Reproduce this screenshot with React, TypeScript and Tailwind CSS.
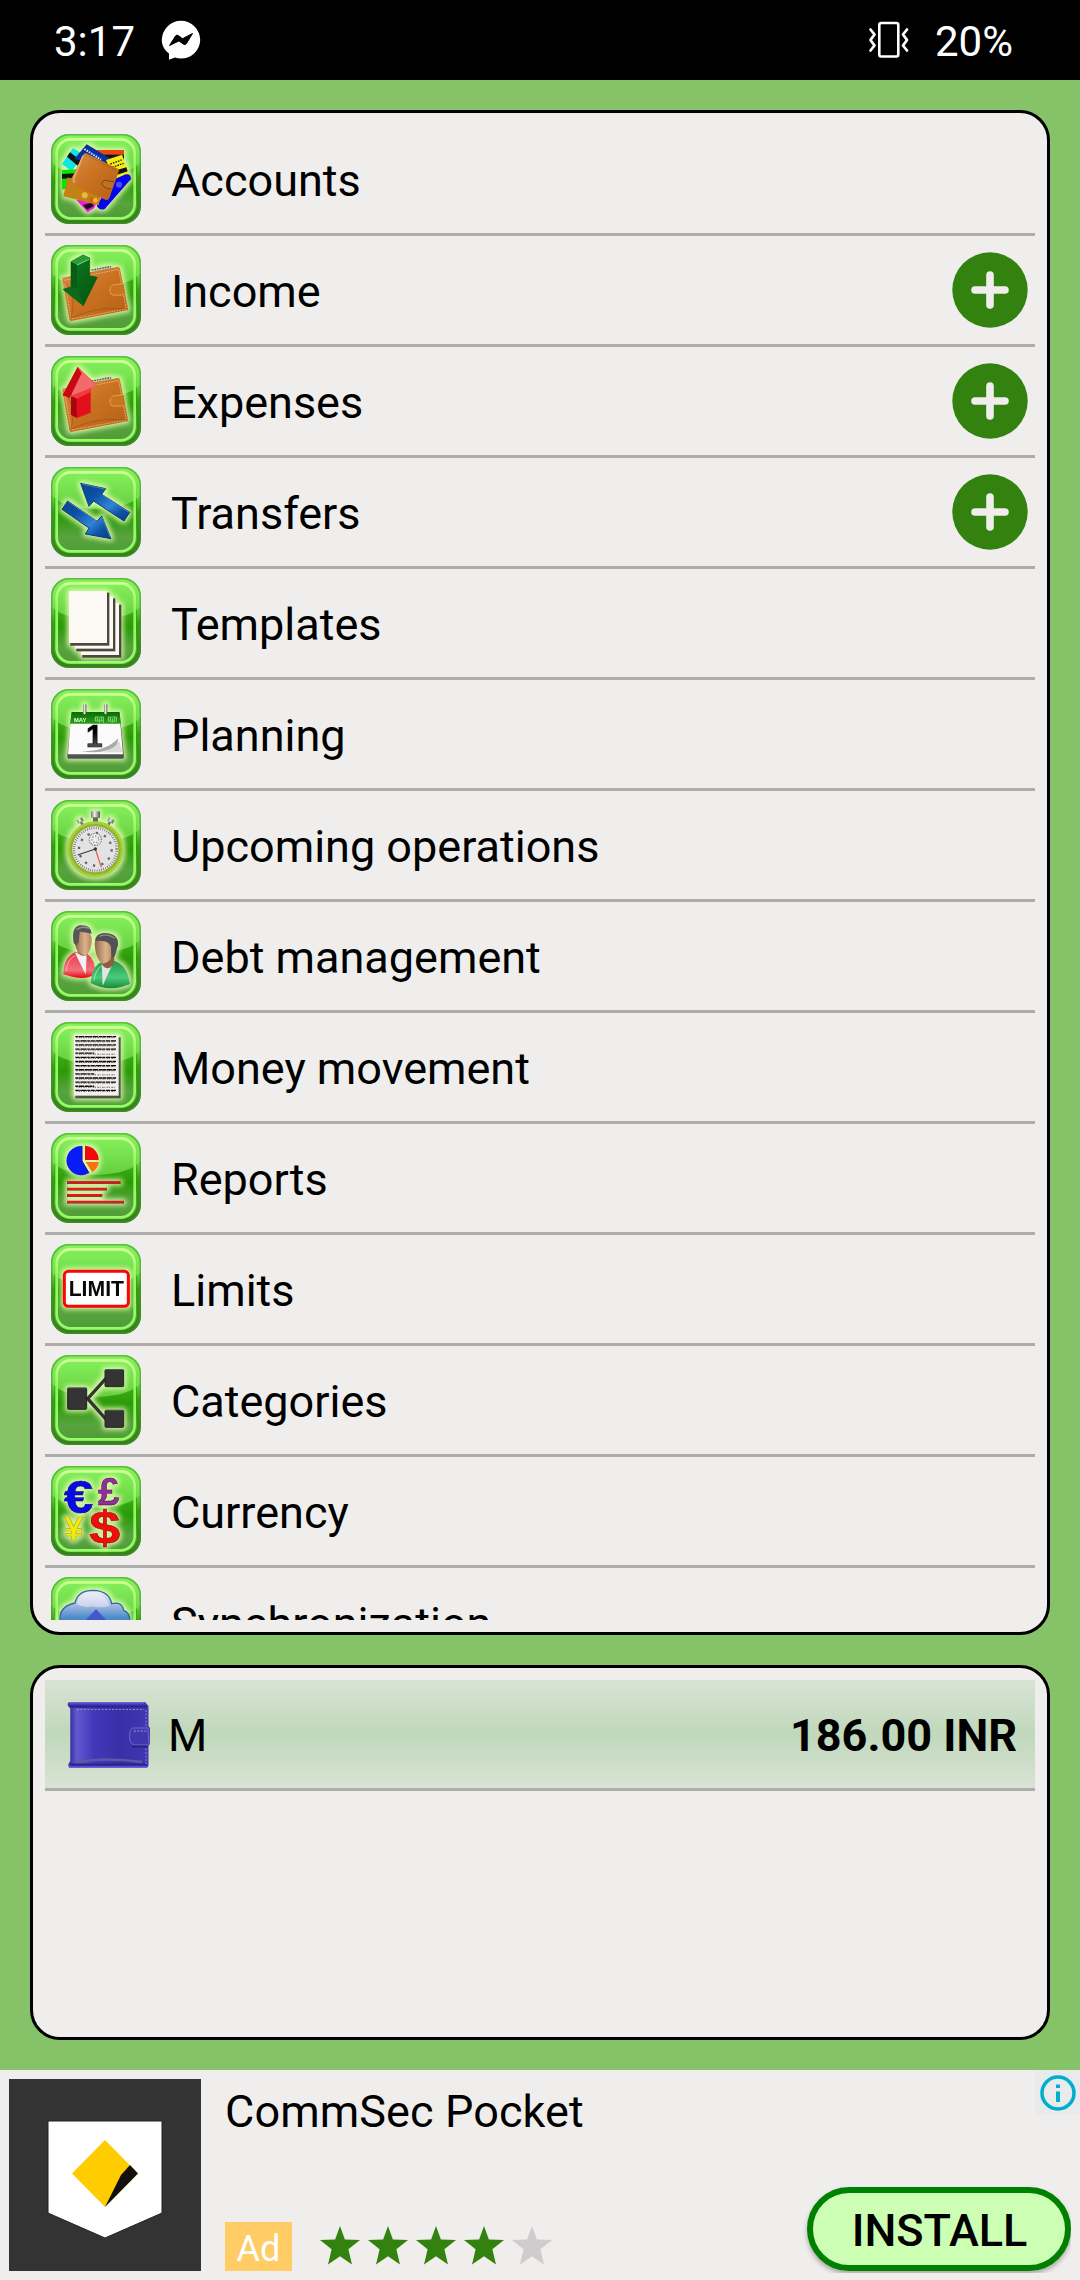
import React from "react";

const poly = (points: string, fill: string, extra: React.SVGProps<SVGPolygonElement> = {}) => (
  <polygon points={points} fill={fill} {...extra} />
);

function SharedDefs() {
  return (
    <svg className="absolute h-0 w-0" aria-hidden="true">
      <defs>
        <linearGradient id="tile" x1="0" y1="0" x2="0" y2="1">
          <stop offset="0" stopColor="#58cf2c" />
          <stop offset="0.55" stopColor="#2b9a08" />
          <stop offset="0.8" stopColor="#57a33e" />
          <stop offset="1" stopColor="#4f9b35" />
        </linearGradient>
        <linearGradient id="edge" x1="0" y1="0" x2="0" y2="1">
          <stop offset="0" stopColor="#59b836" />
          <stop offset="0.3" stopColor="#6fdc48" />
          <stop offset="0.5" stopColor="#3c991c" />
          <stop offset="1" stopColor="#357f1b" />
        </linearGradient>
        <linearGradient id="gloss" x1="0" y1="0" x2="0" y2="1">
          <stop offset="0" stopColor="#85f45d" />
          <stop offset="1" stopColor="#78db50" stopOpacity="0.75" />
        </linearGradient>
        <linearGradient id="ring" x1="0" y1="0" x2="0" y2="1">
          <stop offset="0" stopColor="#cfff94" />
          <stop offset="0.35" stopColor="#8cf75a" />
          <stop offset="1" stopColor="#96fb67" />
        </linearGradient>
        <linearGradient id="leather" x1="0" y1="0" x2="1" y2="1">
          <stop offset="0" stopColor="#dc8c45" />
          <stop offset="0.5" stopColor="#c87020" />
          <stop offset="0.85" stopColor="#bb6519" />
          <stop offset="1" stopColor="#e19a5c" />
        </linearGradient>
        <linearGradient id="downArrow" x1="0" y1="0" x2="1" y2="1">
          <stop offset="0" stopColor="#12802b" />
          <stop offset="1" stopColor="#025108" />
        </linearGradient>
        <linearGradient id="blueArrow" x1="0" y1="0" x2="1" y2="1">
          <stop offset="0" stopColor="#0a458e" />
          <stop offset="0.3" stopColor="#0c50a2" />
          <stop offset="0.6" stopColor="#2f84dc" />
          <stop offset="0.8" stopColor="#0d50a2" />
          <stop offset="1" stopColor="#083f86" />
        </linearGradient>
        <linearGradient id="header" x1="0" y1="0" x2="0" y2="1">
          <stop offset="0" stopColor="#0a6a05" />
          <stop offset="1" stopColor="#29a416" />
        </linearGradient>
        <linearGradient id="digit" x1="0" y1="0" x2="0" y2="1">
          <stop offset="0.4" stopColor="#000" />
          <stop offset="1" stopColor="#777" />
        </linearGradient>
        <linearGradient id="metal" x1="0" y1="0" x2="1" y2="0">
          <stop offset="0" stopColor="#777" />
          <stop offset="0.4" stopColor="#eee" />
          <stop offset="1" stopColor="#555" />
        </linearGradient>
        <linearGradient id="skin" x1="0" y1="0" x2="1" y2="0">
          <stop offset="0" stopColor="#93684a" />
          <stop offset="0.6" stopColor="#dcb28c" />
          <stop offset="1" stopColor="#b18661" />
        </linearGradient>
        <linearGradient id="redCoat" x1="0" y1="0" x2="0" y2="1">
          <stop offset="0" stopColor="#e33a4c" />
          <stop offset="0.7" stopColor="#f4707c" />
          <stop offset="1" stopColor="#e00512" />
        </linearGradient>
        <linearGradient id="greenCoat" x1="0" y1="0" x2="0" y2="1">
          <stop offset="0" stopColor="#1f9a4b" />
          <stop offset="0.6" stopColor="#4cca7b" />
          <stop offset="1" stopColor="#168a3a" />
        </linearGradient>
        <linearGradient id="cloud" x1="0" y1="0" x2="0" y2="1">
          <stop offset="0" stopColor="#f3f4fd" />
          <stop offset="0.25" stopColor="#bcc5e6" />
          <stop offset="0.6" stopColor="#4a8cc8" />
          <stop offset="1" stopColor="#2a6ab0" />
        </linearGradient>
        <linearGradient id="purse" x1="0" y1="0" x2="1" y2="0">
          <stop offset="0" stopColor="#3a30a6" />
          <stop offset="0.08" stopColor="#6359cf" />
          <stop offset="0.3" stopColor="#4338ba" />
          <stop offset="0.65" stopColor="#392fa6" />
          <stop offset="1" stopColor="#4036b0" />
        </linearGradient>
        <clipPath id="tileClip">
          <rect width="270" height="270" rx="54" />
        </clipPath>
        <filter id="glow" x="-20%" y="-20%" width="140%" height="140%" colorInterpolationFilters="sRGB">
          <feMorphology in="SourceAlpha" operator="dilate" radius="5" result="fat" />
          <feGaussianBlur in="fat" stdDeviation="8" result="soft" />
          <feFlood floodColor="#ecffb8" floodOpacity="0.85" />
          <feComposite in2="soft" operator="in" result="halo" />
          <feMerge>
            <feMergeNode in="halo" />
            <feMergeNode in="SourceGraphic" />
          </feMerge>
        </filter>
      </defs>
    </svg>
  );
}

function Tile({ children }: { children: React.ReactNode }) {
  return (
    <svg viewBox="0 0 270 270" className="h-[90px] w-[90px] shrink-0">
      <g clipPath="url(#tileClip)">
        <rect width="270" height="270" fill="url(#edge)" />
        <rect x="10" y="9" width="248" height="250" rx="46" fill="url(#tile)" />
        <path d="M0 0H270V80C235 140 35 140 0 80Z" fill="url(#gloss)" />
        <rect x="2" y="2" width="266" height="266" rx="53" fill="none" stroke="#459625" strokeWidth="5" opacity="0.6" />
        <rect x="17" y="16" width="234" height="237" rx="42" fill="none" stroke="url(#ring)" strokeWidth="8" />
      </g>
      <g filter="url(#glow)">{children}</g>
    </svg>
  );
}

const Accounts = () => (
  <>
    {poly("33,90 66,42 98,62 62,112", "#10e4e4")}
    {poly("48,68 57,55 90,80 80,95", "#111")}
    {poly("137,48 219,48 219,100 137,100", "#ee4413")}
    {poly("137,62 219,62 219,78 137,78", "#151515")}
    {poly("70,75 107,31 182,76 170,100", "#0b2f9e")}
    <path d="M100 45L150 77" stroke="#d4def8" strokeWidth="6" strokeDasharray="5 3" />
    {poly("165,78 213,62 236,122 192,140", "#f4ee12")}
    <path d="M178 90L212 78M184 100L218 88" stroke="#222" strokeWidth="4" strokeDasharray="5 3" />
    {poly("186,112 226,100 230,112 190,125", "#111")}
    {poly("33,108 75,106 75,166 33,166", "#05e505")}
    {poly("33,120 75,118 75,132 33,134", "#111")}
    {poly("76,198 140,198 130,222 110,235", "#f018e0")}
    {poly("96,213 122,206 128,216 108,227", "#1b0a1b")}
    <path d="M180 140L224 121Q240 118 240 135L162 224Q148 232 137 216Z" fill="#0606ee" />
    <circle cx="204" cy="152" r="9" fill="#4b4bff" />
    {poly("50,130 37,187 143,214 152,170", "#c08214")}
    <circle cx="101" cy="184" r="9" fill="#ebb640" />
    <circle cx="122" cy="197" r="7" fill="#e5531c" />
    <circle cx="133" cy="199" r="7" fill="#f4bd30" />
    <path d="M96 64Q100 54 110 60L202 105Q206 110 202 116L175 192Q170 201 160 196L60 151Q55 146 59 138Z" fill="url(#leather)" />
    <path d="M96 65L68 135Q66 142 72 146" fill="none" stroke="#f0bf88" strokeWidth="5" opacity="0.7" />
    <path d="M106 64L195 108" stroke="#8b4d15" strokeWidth="2" strokeDasharray="4 3" />
    <path d="M190 144L164 139Q152 140 153 151Q157 162 180 165" fill="#c07025" stroke="#7a4414" strokeWidth="3" />
  </>
);

const Wallet = () => (
  <>
    <path d="M115 78L165 62L182 64L184 82Z" fill="#c4c9b4" />
    <path d="M122 75L180 65" stroke="#56604a" strokeWidth="4" strokeDasharray="5 3" />
    <path d="M34 98L115 82L200 66Q206 66 207 72L232 195L60 228Q56 227 55 222L34 104Z" fill="url(#leather)" />
    <path d="M40 106L203 73L226 192L61 222Z" fill="none" stroke="#edb36e" strokeWidth="3" strokeDasharray="5 3" />
    <path d="M38 106Q70 145 66 185L60 220Q110 195 170 190L226 192" fill="none" stroke="#8a4a12" strokeWidth="3" opacity="0.5" />
    <path d="M218 116L185 120Q172 132 180 147Q186 153 223 149" fill="#c9741f" stroke="#ecb15c" strokeWidth="3" strokeDasharray="6 2" />
  </>
);

const Income = () => (
  <>
    <Wallet />
    {poly("60,50 96,30 116,39 116,92 139,97 97,182 36,133 60,126", "url(#downArrow)", { stroke: "#0a5c12", strokeWidth: 2 })}
    {poly("60,50 96,30 116,39 78,60", "#2d9a3c")}
    {poly("60,50 78,60 78,128 60,126", "#075d14")}
    <path d="M78 60L114 43" stroke="#7fe08c" strokeWidth="3" />
    {poly("36,133 78,128 97,182", "#0d6a1c")}
  </>
);

const Expenses = () => (
  <>
    <Wallet />
    {poly("35,118 80,33 137,87 119,96 119,170 78,186 60,176 60,120", "#e2101c")}
    {poly("80,33 137,87 58,128", "#f36a6a")}
    {poly("35,118 80,33 92,52 56,126", "#c90812")}
    {poly("60,122 76,116 78,186 60,176", "#a8060f")}
    {poly("60,120 76,113 119,97 119,108 78,128", "#f23a40")}
  </>
);

const Transfers = () => (
  <g stroke="#0b3a78" strokeWidth="3" strokeLinejoin="round">
    {poly("89,49 164,65 152,82 236,136 219,162 128,102 114,118", "url(#blueArrow)")}
    {poly("50,102 33,127 114,183 103,201 180,215 152,147 138,163", "url(#blueArrow)")}
    <path d="M92 51L162 66M154 84L234 136M51 104L136 162M153 150L178 212" fill="none" stroke="#5c9ce0" strokeWidth="2" />
  </g>
);

const Templates = () => (
  <>
    {[[90, 75], [72, 56], [54, 39]].map(([x, y]) => (
      <g key={x}>
        <rect x={x + 4} y={y + 5} width="117" height="159" fill="#4a4640" />
        <rect x={x} y={y} width="114" height="156" fill="#fcf8f3" />
      </g>
    ))}
  </>
);

const Planning = () => (
  <>
    {poly("62,70 206,70 219,202 217,209 51,209 49,202", "#505450")}
    {poly("62,69 205,69 209,106 57,106", "url(#header)")}
    {poly("58,104 208,104 216,196 51,196", "#fbfbfb")}
    <path d="M202 148Q165 188 90 187Q170 198 199 166Z" fill="#aaa" />
    <path d="M205 156Q190 184 150 190H214Z" fill="#dcdcdc" />
    <text x="105" y="173" fontFamily="Liberation Sans" fontWeight="700" fontSize="92" textLength="50" lengthAdjust="spacingAndGlyphs" fill="url(#digit)" stroke="#111" strokeWidth="2">1</text>
    <text x="69" y="99" fontFamily="Liberation Sans" fontWeight="700" fontSize="18" textLength="37" lengthAdjust="spacingAndGlyphs" fill="#e8ffe8">MAY</text>
    <path d="M133 83V96M139 83V96M145 88V101M151 83V96M157 83V101M172 84V97M178 84V97M184 88V101M190 84V97M196 84V97" stroke="#8cd882" strokeWidth="3" />
    <path d="M133 84H157M133 96H157M172 84H196M172 97H196" stroke="#8cd882" strokeWidth="2" />
    <rect x="96" y="44" width="10" height="32" rx="5" fill="url(#metal)" />
    <rect x="159" y="44" width="10" height="32" rx="5" fill="url(#metal)" />
  </>
);

const Upcoming = () => (
  <>
    <rect x="120" y="34" width="27" height="20" rx="3" fill="url(#metal)" />
    <rect x="126" y="52" width="15" height="14" fill="#666" />
    <g transform="rotate(-30 89 64)">
      <rect x="80" y="55" width="18" height="12" fill="url(#metal)" />
      <rect x="85" y="66" width="8" height="10" fill="#777" />
    </g>
    <g transform="rotate(30 178 64)">
      <rect x="169" y="55" width="18" height="12" fill="url(#metal)" />
      <rect x="174" y="66" width="8" height="10" fill="#777" />
    </g>
    <circle cx="133" cy="148" r="80" fill="#eaf6c8" stroke="#a9cf3c" strokeWidth="9" />
    <circle cx="133" cy="148" r="73" fill="#e3e3e5" stroke="#8fb52c" strokeWidth="8" />
    <circle cx="133" cy="148" r="64" fill="none" stroke="#333" strokeWidth="7" strokeDasharray="1.5 5.200" />
    <circle cx="133" cy="148" r="49" fill="none" stroke="#666" strokeWidth="7" strokeDasharray="7 18.650" />
    <circle cx="133" cy="118" r="18" fill="#eee" stroke="#555" strokeWidth="4" strokeDasharray="2 3" />
    <circle cx="133" cy="118" r="10" fill="none" stroke="#888" strokeWidth="4" strokeDasharray="4 5" />
    <path d="M133 147L80 165" stroke="#222" strokeWidth="3" />
    <path d="M133 147L151 202" stroke="#f35432" strokeWidth="3.500" />
    <circle cx="133" cy="147" r="5" fill="#333" />
  </>
);

const Debt = () => (
  <>
    <path d="M37 190Q38 138 72 124L108 128Q135 145 132 190Q100 212 37 190Z" fill="url(#redCoat)" />
    <path d="M72 126L104 190L107 130Z" fill="#f2f2f4" />
    <path d="M74 104H110V130Q98 140 82 128Z" fill="#94694a" />
    <path d="M72 78Q72 58 96 58Q124 58 122 94Q118 128 103 134Q82 130 74 108Z" fill="url(#skin)" />
    <path d="M68 96Q60 48 86 43Q120 40 122 68Q103 64 86 62L83 94L76 104Z" fill="#565658" />
    <path d="M76 56Q92 44 114 52" stroke="#929294" strokeWidth="4" fill="none" />
    <path d="M119 216Q122 166 152 153L190 150Q228 160 237 219Q175 246 119 216Z" fill="url(#greenCoat)" />
    <path d="M152 154L155 224L186 156Z" fill="#dfe6e6" />
    <path d="M150 134H190V156Q170 186 152 160Z" fill="#8c603e" />
    <path d="M131 98Q132 78 158 78Q186 80 186 118Q182 156 156 158Q134 148 131 98Z" fill="url(#skin)" />
    <path d="M132 90Q134 68 158 66Q204 66 201 102L192 134L181 142L180 110Q176 84 132 90Z" fill="#525254" />
    <path d="M145 76Q170 66 192 82" stroke="#8c8c8e" strokeWidth="4" fill="none" />
    <path d="M45 180Q50 144 72 134M129 208Q134 174 153 164" stroke="#ffffff" strokeWidth="3" opacity="0.5" fill="none" />
  </>
);

const Movement = () => (
  <>
    <rect x="73" y="46" width="136" height="183" fill="#4b5544" />
    <rect x="69" y="38" width="134" height="183" fill="#f3efec" />
    {Array.from({ length: 14 }, (_, i) => (
      <g key={i}>
        <path
          d={`M73 ${44 + i * 12.4}H${i === 4 || i === 9 || i === 12 ? 130 : 195}`}
          stroke="#0a0a0a"
          strokeWidth="4"
          strokeDasharray={i % 2 ? "13 2 19 1.5 8 2" : "9 1.5 16 2 12 1"}
        />
        <path d={`M76 ${47 + i * 12.4}H194`} stroke="#222" strokeWidth="2" strokeDasharray="3 4 5 2" />
      </g>
    ))}
  </>
);

const Reports = () => (
  <>
    <path d="M93 84V39A44 44 0 1 0 114 120Z" fill="#0a1cf5" />
    <path d="M102 81V38A43 43 0 0 1 143 81Z" fill="#f20808" />
    <path d="M104 87H143Q142 105 124 118Z" fill="#fb720c" />
    <path d="M93 40V84L114 120" fill="none" stroke="#0b128e" strokeWidth="3" />
    {[[148, 209], [168, 168], [187, 154], [207, 219]].map(([y, x]) => (
      <g key={y}>
        <path d={`M48 ${y - 1}H${x}`} stroke="#ee1420" strokeWidth="6" />
        <path d={`M48 ${y + 3}H${x}`} stroke="#8c1416" strokeWidth="3" />
      </g>
    ))}
  </>
);

const Limits = () => (
  <>
    <rect x="40" y="82" width="192" height="105" rx="12" fill="#fff" stroke="#fb0505" strokeWidth="9" />
    <text x="53" y="156" fontFamily="Liberation Sans" fontWeight="700" fontSize="65" textLength="166" lengthAdjust="spacingAndGlyphs" fill="#080808">LIMIT</text>
  </>
);

const Categories = () => (
  <g>
    <path d="M165 70L110 131L167 195" fill="none" stroke="#333" strokeWidth="10" />
    <g fill="#343434" stroke="#242424" strokeWidth="3">
      <rect x="50" y="99" width="57" height="64" rx="3" />
      <rect x="162" y="44" width="56" height="51" rx="3" />
      <rect x="162" y="166" width="56" height="51" rx="3" />
    </g>
    <path d="M50 99H106M163 44H217M163 166H217" stroke="#6a6a6a" strokeWidth="2" />
  </g>
);

const Currency = () => (
  <g fontFamily="Liberation Sans" fontWeight="700">
    <text x="39" y="140" fontSize="138" textLength="88" lengthAdjust="spacingAndGlyphs" fill="#0a0ae8" stroke="#05056e" strokeWidth="1.500">€</text>
    <text x="141" y="116" fontSize="119" textLength="64" lengthAdjust="spacingAndGlyphs" fill="#8f3096" stroke="#4b0650" strokeWidth="1.500">£</text>
    <text x="40" y="222" fontSize="102" textLength="57" lengthAdjust="spacingAndGlyphs" fill="#efeb10" stroke="#b7b00c" strokeWidth="2">¥</text>
    <text x="115" y="233" fontSize="136" textLength="93" lengthAdjust="spacingAndGlyphs" fill="#f20d0d" stroke="#8a0505" strokeWidth="1.500">$</text>
  </g>
);

const Sync = () => (
  <>
    <path
      d="M62 175Q30 165 27 125Q26 88 72 78Q80 40 127 40Q175 42 182 80Q212 72 218 100Q240 108 236 140Q232 172 200 178Z"
      fill="url(#cloud)"
      stroke="#2d6ba8"
      strokeWidth="4"
    />
    <path d="M78 82Q78 48 125 48Q166 52 176 86Q150 94 126 88Q100 94 78 82Z" fill="#f1f2fc" opacity="0.5" />
    {poly("135,97 200,165 70,165", "#4656cc")}
  </>
);

const items: { label: string; icon: React.FC; add?: boolean }[] = [
  { label: "Accounts", icon: Accounts },
  { label: "Income", icon: Income, add: true },
  { label: "Expenses", icon: Expenses, add: true },
  { label: "Transfers", icon: Transfers, add: true },
  { label: "Templates", icon: Templates },
  { label: "Planning", icon: Planning },
  { label: "Upcoming operations", icon: Upcoming },
  { label: "Debt management", icon: Debt },
  { label: "Money movement", icon: Movement },
  { label: "Reports", icon: Reports },
  { label: "Limits", icon: Limits },
  { label: "Categories", icon: Categories },
  { label: "Currency", icon: Currency },
  { label: "Synchronization", icon: Sync },
];

function AddButton() {
  return (
    <button className="ml-auto mr-[7px]">
      <svg viewBox="0 0 76 76" className="block h-[76px] w-[76px]">
        <circle cx="38" cy="38" r="37.700" fill="#338210" />
        <path d="M38 23V53M23 38H53" stroke="#efeeec" strokeWidth="7.600" strokeLinecap="round" />
      </svg>
    </button>
  );
}

function StatusBar() {
  return (
    <header className="flex h-20 items-center bg-black pl-[54px] pr-[67px] text-[42px] leading-none text-white">
      <span className="mt-[3px]">3:17</span>
      <svg viewBox="0 0 40 40" className="ml-[26px] h-10 w-10">
        <path d="M20 .8A19.2 19.2 0 0 0 .8 20C.8 25.500 3.500 30 8 33.500V39.800L14 37.500Q17 38.600 20 38.600A19.2 19.2 0 0 0 39.200 20A19.2 19.2 0 0 0 20 .8Z" fill="#fff" />
        <path d="M8.500 25.500L14.500 16Q15.700 14.500 17.300 15.500L21.500 18.700L31.500 13.500L25.500 23.500Q24.300 25.300 22.500 24.200L18 20.900Z" fill="#000" stroke="#000" strokeWidth="1" strokeLinejoin="round" />
      </svg>
      <svg viewBox="0 0 42 38" className="ml-auto h-[38px] w-[42px]" fill="none" stroke="#fff" strokeLinecap="round" strokeLinejoin="round">
        <rect x="11.300" y="2" width="19" height="33.500" rx="2" strokeWidth="2.600" />
        <path d="M2.500 8.500L6.500 13.500L2.500 19L6.500 24.500L2.500 29.500M39 8.500L35 13.500L39 19L35 24.500L39 29.500" strokeWidth="2.800" />
      </svg>
      <span className="ml-[25px] mt-[3px]">20%</span>
    </header>
  );
}

function BluePurse() {
  return (
    <svg viewBox="0 0 84 68" className="mt-[2px] h-[68px] w-[84px] shrink-0">
      <path d="M1 1.500Q0 5 2 6L3.500 7V60Q0 63 2 66.500H80Q81.500 66 81.500 64V45L83 43V27L81.500 25V5L78 1Z" fill="#4439b6" />
      <rect x="3.500" y="7" width="77" height="56" fill="url(#purse)" />
      <path d="M2 5.500H80M3 63.500H80" stroke="#2a2288" strokeWidth="2" />
      <path d="M2 1.800H77M2 66.300H80" stroke="#6a60da" strokeWidth="1.400" />
      <path d="M9 61Q40 56 75 61" stroke="#5c5aa6" strokeWidth="2.500" fill="none" />
      <path d="M10 8.500H77M79 9V63" stroke="#8d86dc" strokeWidth="1" strokeDasharray="2 1.500" />
      <path d="M81 27H66Q62.500 28 62.500 36Q63 43 67 44H82Z" fill="#4136b0" stroke="#7068cc" strokeWidth="1" />
      <path d="M67 30H80" stroke="#9a94de" strokeWidth="1" strokeDasharray="2 1.500" />
      <path d="M65 45.500H81" stroke="#292183" strokeWidth="2" />
    </svg>
  );
}

function Star({ filled }: { filled: boolean }) {
  return (
    <svg viewBox="0 0 48 48" className="h-12 w-12">
      <polygon
        points="24,4 28.900,17.500 44,18 32.400,27.300 36,42.500 24,34.200 12,42.500 15.600,27.300 4,18 19.100,17.500"
        fill={filled ? "#338210" : "#cecccc"}
      />
    </svg>
  );
}

function AdBanner() {
  return (
    <footer className="relative flex h-[210px] bg-[#efeeec] p-[9px]">
      <svg viewBox="0 0 192 192" className="h-48 w-48 shrink-0">
        <rect width="192" height="192" fill="#333" />
        <polygon points="39,42 153,42 153,134 96,159 39,134" fill="#fff" stroke="#222" strokeWidth="1" />
        <polygon points="96,61 129,94.500 96,128 63,94.500" fill="#fc0" />
        <polygon points="121,86 129,94.500 96,128 112,96" fill="#15100f" />
      </svg>
      <div className="ml-6 flex flex-col justify-between">
        <div className="mt-[6px] text-[45px] leading-[53px] tracking-[0.1px]">CommSec Pocket</div>
        <div className="flex h-[49px] items-center">
          <span className="h-[49px] w-[67px] bg-[#fc6] pt-[6px] text-center text-[36px] leading-[42px] text-white">Ad</span>
          <div className="-mt-px ml-6 flex">
            {[1, 2, 3, 4, 5].map((n) => (
              <Star key={n} filled={n < 5} />
            ))}
          </div>
        </div>
      </div>
      <div className="ml-auto flex h-[194px] items-end overflow-hidden pl-2">
        <button className="mb-[2px] h-[84px] w-[264px] rounded-full border-[6px] border-[#008000] bg-[#ccffb3] pl-px text-[45px] font-medium leading-[76px] shadow-[0_3px_5px_rgba(0,0,0,0.3)]">
          INSTALL
        </button>
      </div>
      <div className="absolute right-0 top-0 flex h-[45px] w-[45px] items-center justify-center bg-[#e9eaeb]">
        <svg viewBox="0 0 36 36" className="h-9 w-9">
          <circle cx="18" cy="18" r="16" fill="none" stroke="#00aecd" strokeWidth="3.500" />
          <path d="M18 9.500V13M18 16.500V27" stroke="#00aecd" strokeWidth="4" />
        </svg>
      </div>
    </footer>
  );
}

export default function App() {
  return (
    <div className="flex h-[2280px] w-[1080px] flex-col overflow-hidden bg-[#86c268] font-['Roboto',sans-serif] text-black">
      <SharedDefs />
      <StatusBar />
      <main className="flex flex-1 flex-col gap-[30px] p-[30px]">
        <section className="h-[1525px] rounded-[30px] border-[3px] border-black bg-[#efeeec] p-3">
          <ul className="h-full overflow-hidden">
            {items.map(({ label, icon: Icon, add }) => (
              <li key={label} className="flex h-[111px] items-center border-b-[3px] border-[#aeadab] pl-[6px]">
                <Tile>
                  <Icon />
                </Tile>
                <span className="ml-[30px] mt-[2px] text-[45px] leading-[53px]">{label}</span>
                {add && <AddButton />}
              </li>
            ))}
          </ul>
        </section>
        <section className="flex-1 rounded-[30px] border-[3px] border-black bg-[#efeeec] p-3">
          <div className="flex h-[111px] items-center border-b-[3px] border-[#aeadab] bg-linear-to-b from-[#d9e3d5] via-[#c0d8bb] to-[#d9e3d5] pl-[22px] pr-[18px] text-[45px] leading-[53px]">
            <BluePurse />
            <span className="ml-[17px] mt-[2px]">M</span>
            <span className="ml-auto mt-[2px] font-bold">186.00 INR</span>
          </div>
        </section>
      </main>
      <AdBanner />
    </div>
  );
}
